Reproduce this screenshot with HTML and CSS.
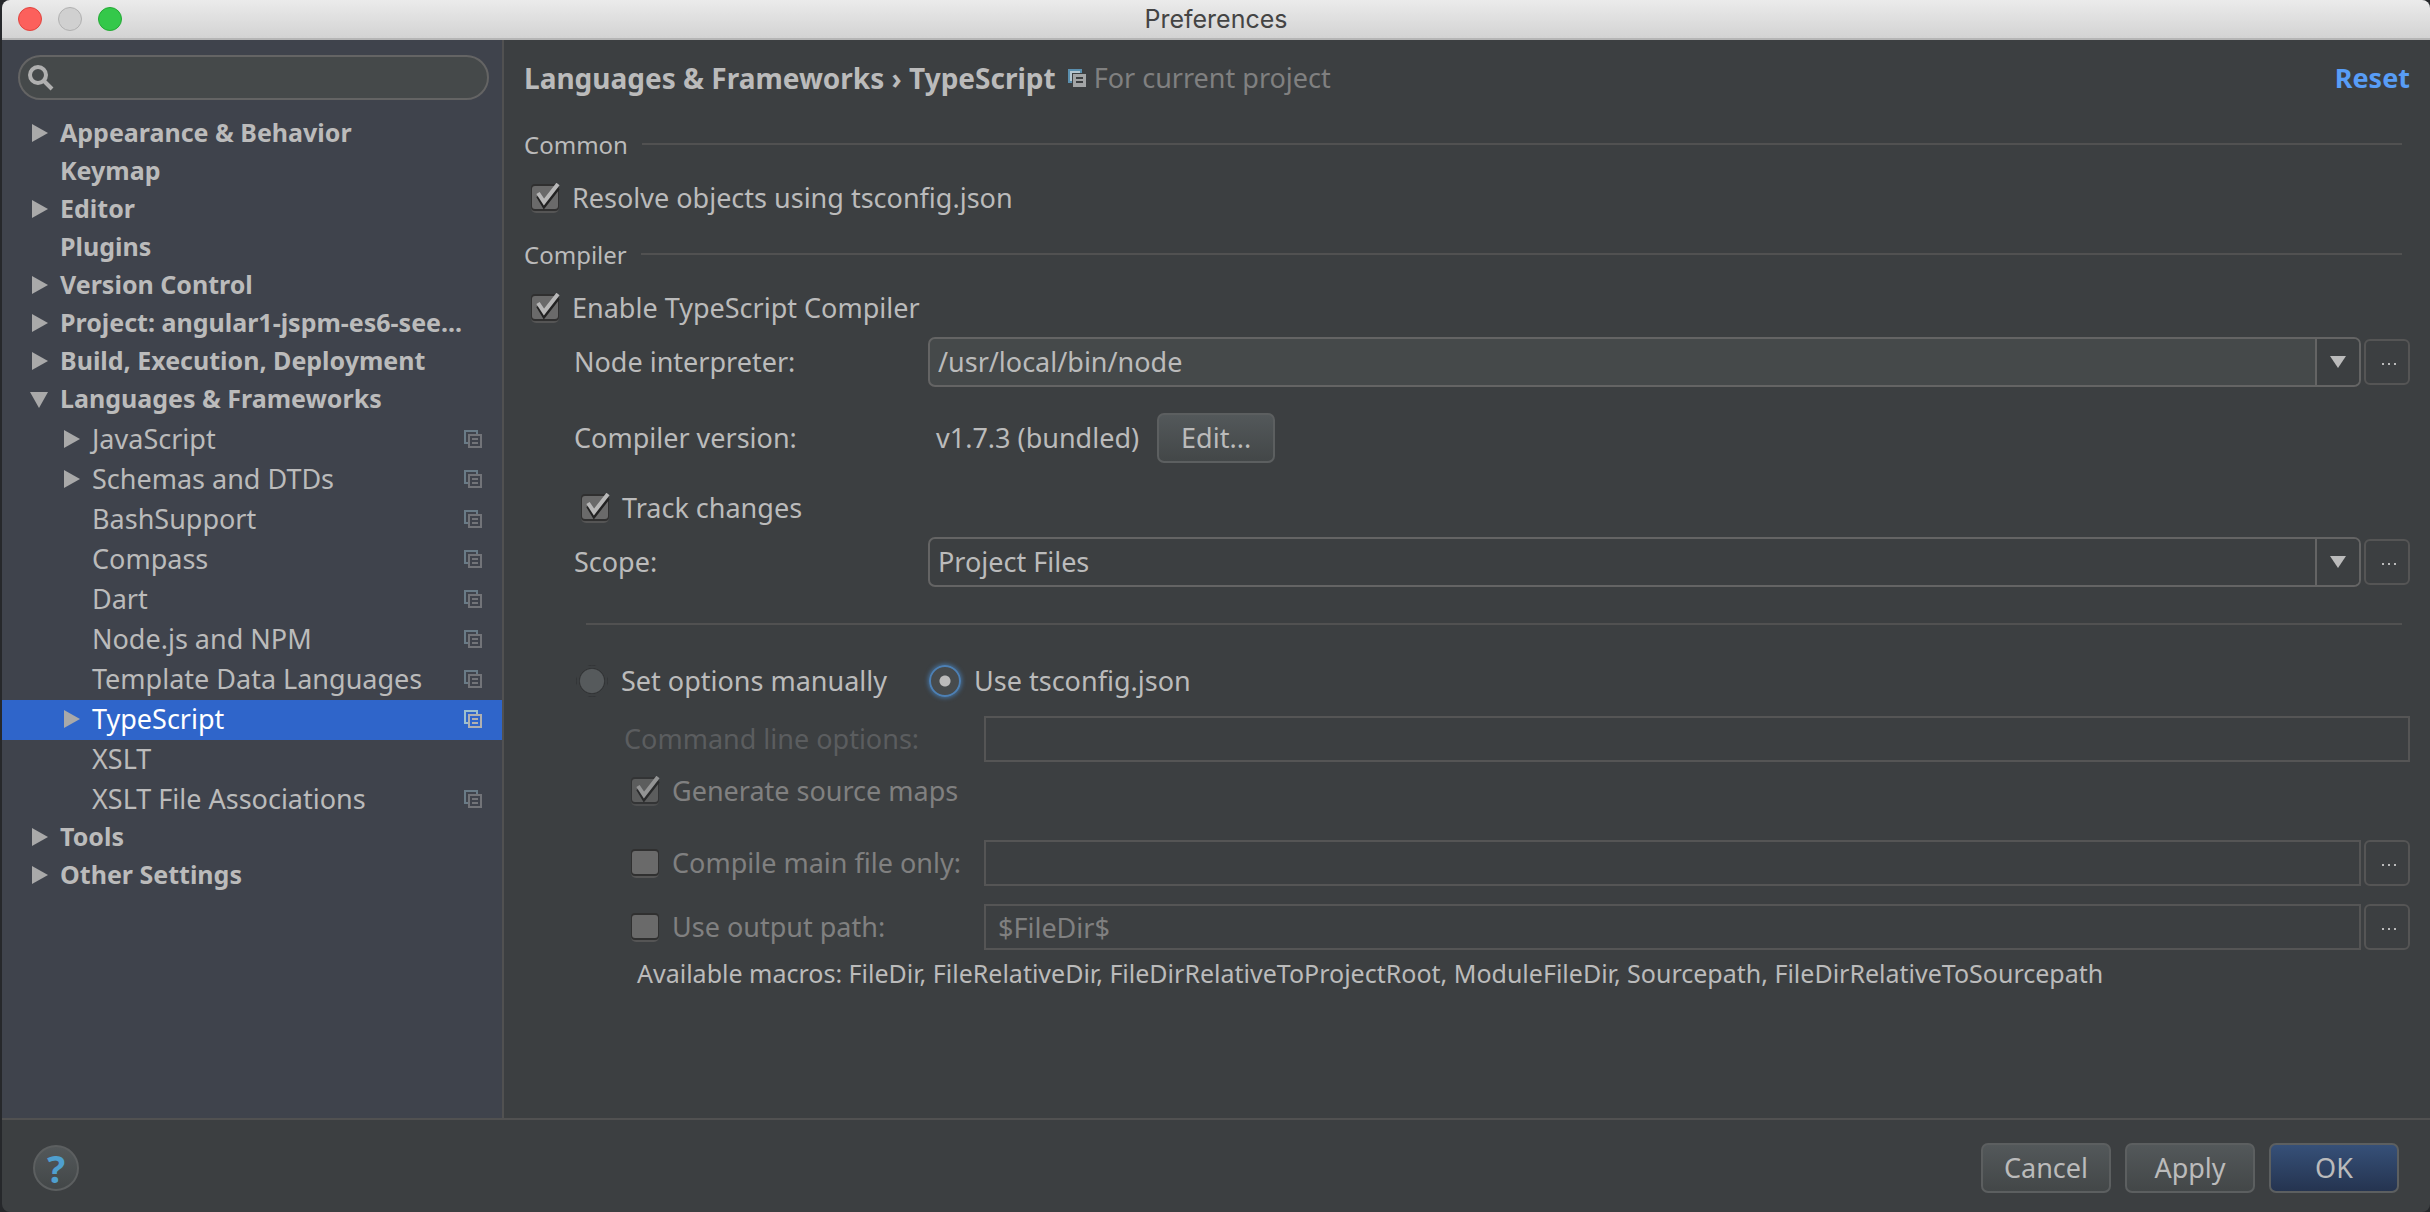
FILE: index.html
```
<!DOCTYPE html>
<html lang="en">
<head>
<meta charset="utf-8">
<title>Preferences</title>
<link rel="stylesheet" href="styles.css">
</head>
<body>
<svg class="defs" aria-hidden="true">
  <symbol id="right" viewBox="0 0 18 18"><path d="M2 0v18L18 9z" fill="#a9a9a9"/></symbol>
  <symbol id="down" viewBox="0 0 18 18"><path d="M0 2h18L9 18z" fill="#a9a9a9"/></symbol>
  <symbol id="copy" viewBox="0 0 18 18"><path class="back" d="M4 13H1V1h12v3" fill="none" stroke-width="2"/><path class="front" d="M5 5h12v12H5zM8 9h6M8 13h6" fill="none" stroke-width="2"/></symbol>
</svg>
<div class="window">
  <header class="titlebar">
    <div class="lights"><button class="light red" aria-label="Close"></button><button class="light gray" aria-label="Minimize"></button><button class="light green" aria-label="Zoom"></button></div>
    <h1>Preferences</h1>
  </header>
  <div class="body">
    <nav class="sidebar">
      <label class="search">
        <svg width="26" height="26" viewBox="0 0 26 26" fill="none" stroke="#b0b0b0" stroke-width="4"><circle cx="10" cy="10" r="8"/><path d="M16 16l8 8"/></svg>
        <input type="text" aria-label="Search">
      </label>
      <ul class="tree">
        <li class="top"><svg class="arrow"><use href="#right"/></svg><span>Appearance &amp; Behavior</span></li>
        <li class="top"><i class="arrow"></i><span>Keymap</span></li>
        <li class="top"><svg class="arrow"><use href="#right"/></svg><span>Editor</span></li>
        <li class="top"><i class="arrow"></i><span>Plugins</span></li>
        <li class="top"><svg class="arrow"><use href="#right"/></svg><span>Version Control</span></li>
        <li class="top"><svg class="arrow"><use href="#right"/></svg><span>Project: angular1-jspm-es6-see...</span></li>
        <li class="top"><svg class="arrow"><use href="#right"/></svg><span>Build, Execution, Deployment</span></li>
        <li class="top"><svg class="arrow"><use href="#down"/></svg><span>Languages &amp; Frameworks</span></li>
        <li class="sub"><svg class="arrow"><use href="#right"/></svg><span>JavaScript</span><svg class="copy"><use href="#copy"/></svg></li>
        <li class="sub"><svg class="arrow"><use href="#right"/></svg><span>Schemas and DTDs</span><svg class="copy"><use href="#copy"/></svg></li>
        <li class="sub"><i class="arrow"></i><span>BashSupport</span><svg class="copy"><use href="#copy"/></svg></li>
        <li class="sub"><i class="arrow"></i><span>Compass</span><svg class="copy"><use href="#copy"/></svg></li>
        <li class="sub"><i class="arrow"></i><span>Dart</span><svg class="copy"><use href="#copy"/></svg></li>
        <li class="sub"><i class="arrow"></i><span>Node.js and NPM</span><svg class="copy"><use href="#copy"/></svg></li>
        <li class="sub"><i class="arrow"></i><span>Template Data Languages</span><svg class="copy"><use href="#copy"/></svg></li>
        <li class="sub selected"><svg class="arrow"><use href="#right"/></svg><span>TypeScript</span><svg class="copy"><use href="#copy"/></svg></li>
        <li class="sub"><i class="arrow"></i><span>XSLT</span></li>
        <li class="sub"><i class="arrow"></i><span>XSLT File Associations</span><svg class="copy"><use href="#copy"/></svg></li>
        <li class="top"><svg class="arrow"><use href="#right"/></svg><span>Tools</span></li>
        <li class="top"><svg class="arrow"><use href="#right"/></svg><span>Other Settings</span></li>
      </ul>
    </nav>
    <main class="content">
      <div class="crumbs">
        <h2>Languages &amp; Frameworks › TypeScript</h2>
        <svg width="18" height="18" viewBox="0 0 18 18"><path d="M0 0h14v4H4v10H0z" fill="#5a8fae"/><path d="M2 2h10v2H4v8H2z" fill="#b4c6d0"/><path d="M5 5h13v13H5z" fill="#a3a5a6"/><path d="M8 9h7M8 13h7" stroke="#3c3f41" stroke-width="2"/></svg>
        <span class="muted">For current project</span>
        <a href="#reset" class="reset">Reset</a>
      </div>
      <div class="section"><h3>Common</h3><hr></div>
      <label class="check resolve"><input type="checkbox" checked><span>Resolve objects using tsconfig.json</span></label>
      <div class="section"><h3>Compiler</h3><hr></div>
      <label class="check enable"><input type="checkbox" checked><span>Enable TypeScript Compiler</span></label>
      <div class="options">
        <div class="row">
          <label class="name" for="node">Node interpreter:</label>
          <span class="combo"><select id="node" class="editable"><option>/usr/local/bin/node</option></select><span class="drop"><svg width="16" height="12"><path d="M0 0h16L8 12z" fill="#bbb"/></svg></span></span>
          <button class="more" aria-label="Browse interpreters"><i></i><i></i><i></i></button>
        </div>
        <div class="row version"><span class="name">Compiler version:</span><span class="value">v1.7.3 (bundled)</span><button class="button edit">Edit...</button></div>
        <label class="check track"><input type="checkbox" checked><span>Track changes</span></label>
        <div class="row">
          <label class="name" for="scope">Scope:</label>
          <span class="combo"><select id="scope"><option>Project Files</option></select><span class="drop"><svg width="16" height="12"><path d="M0 0h16L8 12z" fill="#bbb"/></svg></span></span>
          <button class="more" aria-label="Browse scopes"><i></i><i></i><i></i></button>
        </div>
        <hr class="divider">
        <div class="radios">
          <label class="radio"><input type="radio" name="mode"><span>Set options manually</span></label>
          <label class="radio"><input type="radio" name="mode" checked><span>Use tsconfig.json</span></label>
        </div>
        <div class="manual">
          <div class="row"><label class="name faint" for="cli">Command line options:</label><input id="cli" class="field" type="text" disabled></div>
          <label class="check maps"><input type="checkbox" checked disabled><span>Generate source maps</span></label>
          <div class="row main-file"><label class="check name"><input type="checkbox" disabled><span>Compile main file only:</span></label><input class="field" type="text" aria-label="Main file" disabled><button class="more" aria-label="Browse main file"><i></i><i></i><i></i></button></div>
          <div class="row"><label class="check name"><input type="checkbox" disabled><span>Use output path:</span></label><input class="field" type="text" aria-label="Output path" value="$FileDir$" disabled><button class="more" aria-label="Browse output path"><i></i><i></i><i></i></button></div>
          <p class="macros">Available macros: FileDir, FileRelativeDir, FileDirRelativeToProjectRoot, ModuleFileDir, Sourcepath, FileDirRelativeToSourcepath</p>
        </div>
      </div>
    </main>
  </div>
  <footer class="footer">
    <button class="help">?</button>
    <button class="button">Cancel</button><button class="button">Apply</button><button class="button ok">OK</button>
  </footer>
</div>
</body>
</html>
```
FILE: styles.css
```
* { box-sizing: border-box; }
body { margin: 0; background: #26282b; color: #bbb; font: 27px/40px "Noto Sans", "Open Sans", sans-serif; }
h1, h2, h3, ul, p, hr { margin: 0; padding: 0; font-size: inherit; }
button, input, select { font: inherit; color: inherit; margin: 0; }
hr { border: 0; height: 2px; background: #515151; }
.defs { position: absolute; width: 0; height: 0; }
.window { min-height: 100vh; margin-left: 2px; display: flex; flex-direction: column; background: #3c3f41; border-radius: 8px; overflow: hidden; }
.titlebar { height: 40px; display: grid; grid-template-columns: 1fr auto 1fr; align-items: center; background: linear-gradient(#ebebeb, #d3d3d3); border-bottom: 2px solid #b5b5b5; }
.titlebar h1 { font: 400 25px/36px Inter, sans-serif; color: #444; }
.lights { display: flex; gap: 16px; padding-left: 16px; }
.light { width: 24px; height: 24px; border-radius: 50%; padding: 0; border: 1px solid; }
.red { background: #fc605c; border-color: #e0443e; }
.gray { background: #d0d0d0; border-color: #b0b0b0; }
.green { background: #34c84a; border-color: #24a935; }
.body { flex: 1; display: flex; }
.sidebar { width: 502px; flex: none; background: #3f434c; border-right: 2px solid #515151; }
.search { display: flex; align-items: center; gap: 8px; height: 45px; margin: 15px 13px 16px 16px; padding: 0 10px 0 8px; border: 2px solid #646464; border-radius: 23px; background: #45494a; }
.search input { flex: 1; min-width: 0; border: 0; outline: 0; background: none; }
.tree { list-style: none; }
.tree li { display: flex; align-items: center; padding-right: 20px; white-space: nowrap; }
.tree .top { height: 38px; padding-left: 28px; padding-bottom: 4px; font-weight: 700; font-size: 25px; }
.tree .sub { height: 40px; padding-left: 60px; padding-bottom: 2px; }
.tree span { flex: 1; min-width: 0; }
.tree .top span { padding-bottom: 2px; }
.arrow { width: 18px; height: 18px; flex: none; margin-right: 12px; }
.copy { width: 18px; height: 18px; opacity: .45; }
.back { stroke: #9cc0cf; }
.front { stroke: #b0b0b0; }
.selected { background: #2f65ca; color: #fff; }
.selected .copy { opacity: 1; }
.selected .back { stroke: #bfdcec; }
.selected .front { stroke: #dcdcdc; }
.content { flex: 1; min-width: 0; padding: 18px 20px 0; }
.crumbs { display: flex; align-items: center; white-space: nowrap; }
.crumbs h2 { font-size: 28px; }
.crumbs svg { margin: 0 8px 0 12px; }
.muted { color: #808080; }
.reset { margin-left: auto; color: #589df6; font-weight: 700; text-decoration: none; }
.section { display: flex; align-items: center; gap: 14px; height: 40px; margin: 26px 8px 0 0; font-size: 24px; }
.section h3 { font-weight: 400; padding-top: 2px; }
.section hr { flex: 1; }
.check, .radio { display: flex; align-items: center; height: 40px; white-space: nowrap; }
.check { gap: 12px; }
.resolve, .enable { margin: 14px 0 0 6px; }
.resolve + .section { margin-top: 16px; }
.check input { appearance: none; width: 30px; height: 30px; flex: none; background: url("data:image/svg+xml,%3Csvg xmlns='http://www.w3.org/2000/svg' viewBox='0 0 30 30'%3E%3Crect x='1' y='3' width='28' height='27' rx='5' fill='%23555'/%3E%3Crect x='1' y='1' width='28' height='27' rx='4' fill='%23303030'/%3E%3Crect x='2' y='3' width='26' height='23' rx='3' fill='%236a6a6a'/%3E%3C/svg%3E"); }
.check input:checked { background: url("data:image/svg+xml,%3Csvg xmlns='http://www.w3.org/2000/svg' viewBox='0 0 30 30'%3E%3Crect x='1' y='3' width='28' height='27' rx='5' fill='%23555'/%3E%3Crect x='1' y='1' width='28' height='27' rx='4' fill='%23303030'/%3E%3Crect x='2' y='3' width='26' height='23' rx='3' fill='%236a6a6a'/%3E%3Cpath d='M8 13l6 10L28 5' fill='none' stroke='%23222' stroke-width='4'/%3E%3Cpath d='M8 10l6 9L28 1' fill='none' stroke='%23b8b8b8' stroke-width='4'/%3E%3C/svg%3E"); }
.check:has(input:disabled) { color: #808080; }
.check input:checked:disabled { opacity: .7; }
.options { padding: 8px 0 0 50px; }
.row { display: flex; align-items: center; height: 52px; white-space: nowrap; }
.row .name { width: 354px; flex: none; }
.combo { position: relative; flex: 1; min-width: 0; height: 50px; margin-right: 3px; display: flex; }
.combo select { appearance: none; width: 100%; height: 50px; padding: 0 60px 0 8px; border: 2px solid #646464; border-radius: 7px; background: #3c3f41; outline: 0; }
.combo .editable { background: #45494a; }
.drop { position: absolute; inset: 2px 2px 2px auto; width: 44px; border-left: 2px solid #646464; border-radius: 0 5px 5px 0; background: #3c3f41; display: flex; align-items: center; justify-content: center; pointer-events: none; }
.more { width: 46px; height: 46px; flex: none; padding: 4px 0 0 4px; border: 2px solid #555; border-radius: 6px; background: none; display: flex; align-items: center; justify-content: center; gap: 4px; }
.more i { width: 2px; height: 2px; background: #bbb; }
.button { height: 50px; min-width: 130px; padding: 0 20px; border: 2px solid #5c5f60; border-radius: 7px; background: linear-gradient(#53585a, #434748); }
.version { margin-top: 24px; }
.value { padding-left: 8px; margin-right: 18px; }
.edit { min-width: 118px; }
.track { margin: 24px 0 8px 6px; }
.divider { margin: 35px 8px 36px 12px; }
.radios { display: flex; gap: 40px; }
.radio { gap: 13px; padding-left: 2px; }
.radio input { appearance: none; width: 32px; height: 32px; border: 2px solid transparent; border-radius: 50%; background: radial-gradient(#565a5c 58%, #303234 64%, transparent 68%); }
.radio input:checked { border-color: #4d80b5; background: radial-gradient(circle, #bbb 5px, #474b4d 6px); box-shadow: 0 0 4px 1px #45709b; }
.manual { padding-left: 50px; }
.manual .row { margin-top: 12px; }
.manual .main-file { margin-top: 26px; }
.manual .name { width: 360px; }
.manual .check { padding-left: 6px; }
.maps { margin-top: 6px; }
.faint { color: #5b5d5f; }
.field { flex: 1; min-width: 0; height: 46px; padding: 0 12px; border: 2px solid #555; border-radius: 0; background: none; color: #808080; }
.field + .more { margin-left: 3px; }
.macros { font-size: 25px; padding-left: 13px; }
.footer { display: flex; align-items: center; gap: 14px; height: 94px; flex: none; padding: 4px 31px 0; border-top: 2px solid #515151; }
.help { width: 46px; height: 46px; margin-right: auto; padding: 0; border: 2px solid #5c5f60; border-radius: 50%; background: linear-gradient(#53585a, #434748); color: #4f9fcf; font-weight: 700; font-size: 38px; line-height: 40px; }
.ok { background: linear-gradient(#365078, #253450); }
```
